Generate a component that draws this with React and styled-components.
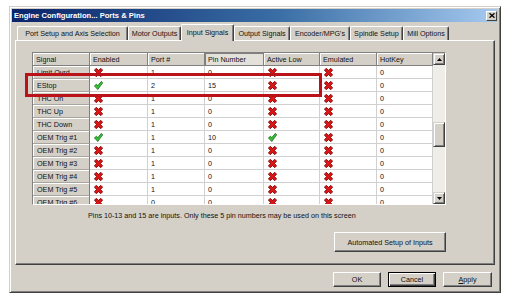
import React from 'react';
import styled, { createGlobalStyle } from 'styled-components';

const Global = createGlobalStyle`
  html, body { margin: 0; padding: 0; background: #fff; }
  body {
    width: 513px; height: 299px; overflow: hidden;
    font-family: "Liberation Sans", Arial, sans-serif;
    font-size: 7.2px; color: #111;
  }
`;

const Page = styled.div`
  width: 513px;
  height: 299px;
  padding-top: 6px;
  box-sizing: border-box;
`;

const Window = styled.div`
  margin-left: 9px;
  width: 492px;
  height: 287px;
  box-sizing: border-box;
  background: #d4d0c8;
  border: 1px solid;
  border-color: #d4d0c8 #404040 #404040 #d4d0c8;
  box-shadow: inset 1px 1px #fff, inset -1px -1px #808080;
  padding: 2px;
  display: flex;
  flex-direction: column;
`;

const TitleBar = styled.div`
  height: 13px;
  flex: none;
  background: linear-gradient(to right, #0a246a 0%, #3a6ea5 55%, #a6caf0 100%);
  display: flex;
  align-items: center;
  justify-content: space-between;
  padding: 0 1px 0 2px;
`;

const TitleText = styled.span`
  color: #fff;
  font-weight: bold;
  font-size: 7.6px;
  white-space: nowrap;
`;

const CloseBtn = styled.div`
  width: 11px;
  height: 10px;
  box-sizing: border-box;
  background: #d4d0c8;
  border: 1px solid;
  border-color: #fff #404040 #404040 #fff;
  display: flex;
  align-items: center;
  justify-content: center;
`;

const Body = styled.div`
  flex: 1;
  display: flex;
  flex-direction: column;
  padding: 2px 3px 0 3px;
`;

const TabStrip = styled.div`
  display: flex;
  align-items: flex-end;
  height: 16px;
  padding-left: 2px;
  position: relative;
  z-index: 1;
`;

const Tab = styled.div`
  width: ${p => p.$w}px;
  height: ${p => (p.$active ? 17 : 14)}px;
  margin-bottom: ${p => (p.$active ? -1 : 0)}px;
  box-sizing: border-box;
  background: #d4d0c8;
  border-top: 1px solid #fff;
  border-left: 1px solid #fff;
  border-right: 1px solid #404040;
  border-radius: 2px 2px 0 0;
  box-shadow: inset -1px 0 #808080;
  display: flex;
  align-items: center;
  justify-content: center;
  padding-bottom: ${p => (p.$active ? 2 : 0)}px;
  white-space: nowrap;
`;

const TabPanel = styled.div`
  position: relative;
  height: 225px;
  box-sizing: border-box;
  border: 1px solid;
  border-color: #fff #404040 #404040 #fff;
  box-shadow: inset -1px -1px #808080;
  padding: 11px 0 0 16px;
  display: flex;
  flex-direction: column;
`;

const GridFrame = styled.div`
  width: 414px;
  height: 153px;
  box-sizing: border-box;
  border: 1px solid;
  border-color: #808080 #fff #fff #808080;
  display: flex;
  overflow: hidden;
  background: #fff;
`;

const Table = styled.div`
  display: grid;
  grid-template-columns: 57px 58px 57px 59px 56px 57px 56px;
  grid-auto-rows: 13px;
  align-content: start;
`;

const HeadCell = styled.div`
  box-sizing: border-box;
  padding-left: 3px;
  display: flex;
  align-items: center;
  background: ${p => (p.$active ? '#e4e1da' : '#d4d0c8')};
  border-right: 1px solid #808080;
  border-bottom: 1px solid #808080;
  box-shadow: ${p => (p.$active ? 'inset 1px 1px #808080' : 'inset 1px 1px #fff')};
  white-space: nowrap;
`;

const NameCell = styled.div`
  box-sizing: border-box;
  padding-left: 4px;
  display: flex;
  align-items: center;
  background: #d4d0c8;
  border-right: 1px solid #808080;
  border-bottom: 1px solid #a8a59e;
  box-shadow: inset 1px 1px #fff;
  white-space: nowrap;
`;

const Cell = styled.div`
  box-sizing: border-box;
  padding-left: ${p => (p.$icon ? 4 : 3)}px;
  display: flex;
  align-items: center;
  background: #fff;
  border-right: 1px solid #d0d0d0;
  border-bottom: 1px solid #d0d0d0;
`;

const ScrollBar = styled.div`
  width: 12px;
  flex: none;
  display: flex;
  flex-direction: column;
  background: #eeede8;
`;

const ScrollBtn = styled.div`
  width: 12px;
  height: 12px;
  flex: none;
  box-sizing: border-box;
  background: #d4d0c8;
  border: 1px solid;
  border-color: #d4d0c8 #404040 #404040 #d4d0c8;
  box-shadow: inset 1px 1px #fff, inset -1px -1px #808080;
  display: flex;
  align-items: center;
  justify-content: center;
`;

const Track = styled.div`
  flex: 1;
  display: flex;
  flex-direction: column;
  padding-top: 57px;
`;

const Thumb = styled.div`
  height: 25px;
  box-sizing: border-box;
  background: #d4d0c8;
  border: 1px solid;
  border-color: #d4d0c8 #404040 #404040 #d4d0c8;
  box-shadow: inset 1px 1px #fff, inset -1px -1px #808080;
`;

const Note = styled.div`
  margin-top: 6px;
  padding-left: 56px;
  line-height: 10px;
  white-space: nowrap;
`;

const AutoRow = styled.div`
  width: 414px;
  display: flex;
  justify-content: flex-end;
  margin-top: 11px;
`;

const Button = styled.div`
  width: ${p => p.$w}px;
  height: ${p => p.$h}px;
  box-sizing: border-box;
  background: #d4d0c8;
  border: 1px solid;
  border-color: ${p => (p.$default ? '#000' : '#fff #404040 #404040 #fff')};
  box-shadow: ${p => (p.$default
    ? 'inset 1px 1px #fff, inset -1px -1px #404040, inset -2px -2px #808080'
    : 'inset -1px -1px #808080')};
  display: flex;
  align-items: center;
  justify-content: center;
  white-space: nowrap;
`;

const ButtonRow = styled.div`
  display: flex;
  justify-content: flex-end;
  gap: 7px;
  margin-top: 7px;
  padding-right: 3px;
`;

const Highlight = styled.div`
  position: absolute;
  left: 9px;
  top: 32px;
  width: 297px;
  height: 24px;
  box-sizing: border-box;
  border: 3px solid #bb1219;
  pointer-events: none;
`;

const Cross = () => (
  <svg width="9" height="9" viewBox="0 0 10 10">
    <polygon
      points="0.4,2.4 2.4,0.4 5,2.6 7.6,0.4 9.6,2.4 7.2,5 9.6,7.6 7.6,9.6 5,7.4 2.4,9.6 0.4,7.6 2.8,5"
      fill="#e01414"
      stroke="#6a0808"
      strokeWidth="0.9"
      strokeLinejoin="round"
    />
  </svg>
);

const Check = () => (
  <svg width="9" height="9" viewBox="0 0 10 10">
    <polygon
      points="0.4,5.4 2.8,3.6 4,5.4 8.2,0.4 9.7,2 4.2,9.5"
      fill="#38c038"
      stroke="#0c640c"
      strokeWidth="0.8"
      strokeLinejoin="round"
    />
  </svg>
);

const Arrow = ({ up }) => (
  <svg width="5" height="3" viewBox="0 0 5 3">
    <polygon points={up ? '2.5,0 5,3 0,3' : '0,0 5,0 2.5,3'} fill="#000" />
  </svg>
);

const tabs = [
  ['Port Setup and Axis Selection', 111],
  ['Motor Outputs', 53],
  ['Input Signals', 53, true],
  ['Output Signals', 56],
  ["Encoder/MPG's", 60],
  ['Spindle Setup', 53],
  ['Mill Options', 46],
];

const headers = ['Signal', 'Enabled', 'Port #', 'Pin Number', 'Active Low', 'Emulated', 'HotKey'];

const rows = [
  ['Limit Ovrd', false, 1, 0, false, false, 0],
  ['EStop', true, 2, 15, false, false, 0],
  ['THC On', false, 1, 0, false, false, 0],
  ['THC Up', false, 1, 0, false, false, 0],
  ['THC Down', false, 1, 0, false, false, 0],
  ['OEM Trig #1', true, 1, 10, true, false, 0],
  ['OEM Trig #2', false, 1, 0, false, false, 0],
  ['OEM Trig #3', false, 1, 0, false, false, 0],
  ['OEM Trig #4', false, 1, 0, false, false, 0],
  ['OEM Trig #5', false, 1, 0, false, false, 0],
  ['OEM Trig #6', false, 0, 0, false, false, 0],
];

const Flag = ({ on }) => (on ? <Check /> : <Cross />);

export default function App() {
  return (
    <Page>
      <Global />
      <Window>
        <TitleBar>
          <TitleText>Engine Configuration... Ports &amp; Pins</TitleText>
          <CloseBtn>
            <svg width="6" height="5" viewBox="0 0 6 5">
              <path d="M0.5 0.3 L5.5 4.7 M5.5 0.3 L0.5 4.7" stroke="#000" strokeWidth="1.3" />
            </svg>
          </CloseBtn>
        </TitleBar>
        <Body>
          <TabStrip>
            {tabs.map(([label, w, active]) => (
              <Tab key={label} $w={w} $active={active}>{label}</Tab>
            ))}
          </TabStrip>
          <TabPanel>
            <GridFrame>
              <Table>
                {headers.map(h => (
                  <HeadCell key={h} $active={h === 'Pin Number'}>{h}</HeadCell>
                ))}
                {rows.map(r => (
                  <React.Fragment key={r[0]}>
                    <NameCell>{r[0]}</NameCell>
                    <Cell $icon><Flag on={r[1]} /></Cell>
                    <Cell>{r[2]}</Cell>
                    <Cell>{r[3]}</Cell>
                    <Cell $icon><Flag on={r[4]} /></Cell>
                    <Cell $icon><Flag on={r[5]} /></Cell>
                    <Cell>{r[6]}</Cell>
                  </React.Fragment>
                ))}
              </Table>
              <ScrollBar>
                <ScrollBtn><Arrow up /></ScrollBtn>
                <Track><Thumb /></Track>
                <ScrollBtn><Arrow /></ScrollBtn>
              </ScrollBar>
            </GridFrame>
            <Note>Pins 10-13 and 15 are inputs. Only these 5 pin numbers may be used on this screen</Note>
            <AutoRow>
              <Button $w={112} $h={20}>Automated Setup of Inputs</Button>
            </AutoRow>
            <Highlight />
          </TabPanel>
          <ButtonRow>
            <Button $w={48} $h={15}>OK</Button>
            <Button $w={48} $h={15} $default>Cancel</Button>
            <Button $w={49} $h={15}><span><u>A</u>pply</span></Button>
          </ButtonRow>
        </Body>
      </Window>
    </Page>
  );
}
